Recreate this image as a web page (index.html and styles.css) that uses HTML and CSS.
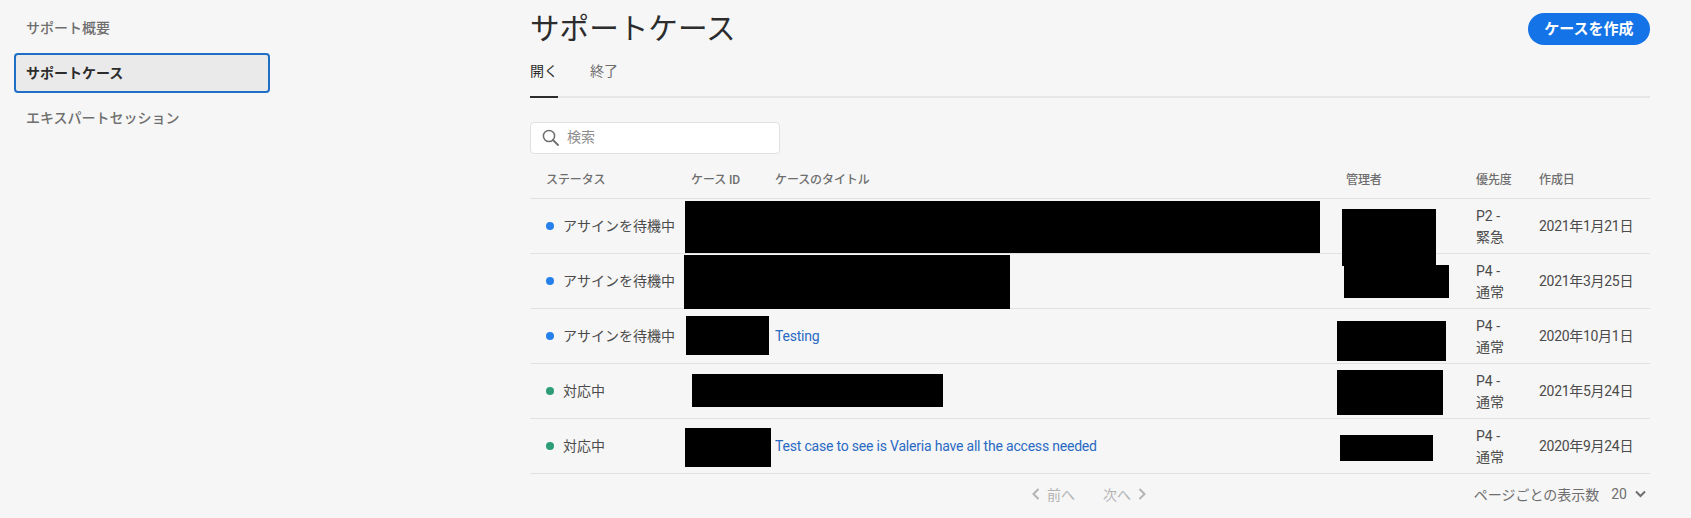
FILE: index.html
```html
<!DOCTYPE html>
<html lang="ja">
<head>
<meta charset="utf-8">
<title>サポートケース</title>
<link rel="stylesheet" href="styles.css">
</head>
<body>
<div class="page">
  <nav class="sidebar">
    <a class="nav-item">サポート概要</a>
    <a class="nav-item selected">サポートケース</a>
    <a class="nav-item">エキスパートセッション</a>
  </nav>
  <main class="main">
    <header class="head">
      <h1 class="title">サポートケース</h1>
      <button class="create">ケースを作成</button>
    </header>
    <div class="tabs">
      <span class="tab active">開く</span>
      <span class="tab">終了</span>
    </div>
    <div class="search">
      <svg class="search-icon" width="17" height="17" viewBox="0 0 17 17" fill="none" stroke="#6e6e6e" stroke-width="1.5"><circle cx="7" cy="7" r="5.6"/><path d="M11 11l5 5" stroke-linecap="round" stroke-width="1.8"/></svg>
      <span class="placeholder">検索</span>
    </div>
    <table class="cases">
      <colgroup>
        <col class="c-status"><col class="c-id"><col class="c-title"><col class="c-owner"><col class="c-prio"><col class="c-date">
      </colgroup>
      <thead>
        <tr><th class="first">ステータス</th><th>ケース ID</th><th>ケースのタイトル</th><th>管理者</th><th>優先度</th><th>作成日</th></tr>
      </thead>
      <tbody>
        <tr><td class="first"><i class="dot blue"></i>アサインを待機中</td><td></td><td></td><td></td><td class="prio">P2 - 緊急</td><td class="date">2021年1月21日</td></tr>
        <tr><td class="first"><i class="dot blue"></i>アサインを待機中</td><td></td><td></td><td></td><td class="prio">P4 - 通常</td><td class="date">2021年3月25日</td></tr>
        <tr><td class="first"><i class="dot blue"></i>アサインを待機中</td><td></td><td><a class="link">Testing</a></td><td></td><td class="prio">P4 - 通常</td><td class="date">2020年10月1日</td></tr>
        <tr><td class="first"><i class="dot green"></i>対応中</td><td></td><td></td><td></td><td class="prio">P4 - 通常</td><td class="date">2021年5月24日</td></tr>
        <tr><td class="first"><i class="dot green"></i>対応中</td><td></td><td><a class="link">Test case to see is Valeria have all the access needed</a></td><td></td><td class="prio">P4 - 通常</td><td class="date">2020年9月24日</td></tr>
      </tbody>
    </table>
    <div class="pager">
      <span class="pg">
        <svg width="8" height="12" viewBox="0 0 8 12" fill="none" stroke="#b3b3b3" stroke-width="2"><path d="M6.5 1L1.5 6l5 5"/></svg>
        <span>前へ</span>
      </span>
      <span class="pg next">
        <span>次へ</span>
        <svg width="8" height="12" viewBox="0 0 8 12" fill="none" stroke="#b3b3b3" stroke-width="2"><path d="M1.5 1l5 5-5 5"/></svg>
      </span>
      <span class="per-page">
        <span>ページごとの表示数</span>
        <span class="count">20</span>
        <svg width="11" height="8" viewBox="0 0 11 8" fill="none" stroke="#6e6e6e" stroke-width="2"><path d="M1 1.5l4.5 4.5L10 1.5"/></svg>
      </span>
    </div>
    <div class="redact r1"></div>
    <div class="redact r2"></div>
    <div class="redact r3"></div>
    <div class="redact r4"></div>
    <div class="redact r5"></div>
    <div class="redact m1"></div>
    <div class="redact m2"></div>
    <div class="redact m3"></div>
    <div class="redact m4"></div>
    <div class="redact m5"></div>
  </main>
</div>
</body>
</html>
```
FILE: styles.css
```css
* { box-sizing: border-box; }
html, body { margin: 0; height: 518px; overflow: hidden; }
body {
  background: #f6f6f6;
  color: #4b4b4b;
  font-family: Roboto, "Noto Sans CJK JP", sans-serif;
  font-size: 14px;
}
.page { display: flex; height: 518px; }

.sidebar {
  width: 530px;
  flex: none;
  padding: 8px 0 0 14px;
  display: flex;
  flex-direction: column;
  gap: 5px;
}
.nav-item {
  width: 256px;
  height: 40px;
  display: flex;
  align-items: center;
  padding: 0 0 2px 10px;
  font-weight: 500;
  color: #6e6e6e;
  border: 2px solid transparent;
  border-radius: 4px;
}
.nav-item.selected {
  background: #eaeaea;
  color: #2c2c2c;
  font-weight: 700;
  border-color: #1f6fc4;
}

.main { position: relative; width: 1120px; flex: none; }
.head {
  height: 54px;
  display: flex;
  align-items: flex-start;
  justify-content: space-between;
}
.title {
  margin: 8px 0 0;
  font-size: 29.6px;
  line-height: 42px;
  font-weight: 400;
  color: #2c2c2c;
}
.create {
  margin-top: 13px;
  width: 122px;
  height: 32px;
  border: 0;
  border-radius: 16px;
  background: #1473e6;
  color: #fff;
  font: 700 15px/30px Roboto, "Noto Sans CJK JP", sans-serif;
  padding: 0;
}

.tabs {
  height: 44px;
  display: flex;
  gap: 32px;
  border-bottom: 2px solid #e6e6e6;
}
.tab {
  height: 44px;
  line-height: 34px;
  color: #6e6e6e;
}
.tab.active { color: #2c2c2c; border-bottom: 2px solid #2c2c2c; }

.search {
  margin-top: 24px;
  width: 250px;
  height: 32px;
  display: flex;
  align-items: center;
  gap: 8px;
  padding: 0 0 1px 11px;
  background: #fff;
  border: 1px solid #e1e1e1;
  border-radius: 4px;
}
.placeholder { color: #8e8e8e; line-height: 18px; margin-bottom: 2px; }

.cases {
  width: 1120px;
  table-layout: fixed;
  border-collapse: collapse;
}
.c-status { width: 161px; }
.c-id { width: 84px; }
.c-title { width: 571px; }
.c-owner { width: 130px; }
.c-prio { width: 63px; }
.c-date { width: 111px; }
.cases th {
  height: 44px;
  padding: 6px 0 0;
  text-align: left;
  font-size: 12px;
  font-weight: 500;
  letter-spacing: -0.1px;
  color: #6e6e6e;
  border-bottom: 1px solid #e1e1e1;
}
.cases td {
  height: 55px;
  padding: 2px 0 0;
  border-bottom: 1px solid #e1e1e1;
  line-height: 21px;
}
.cases .first { padding-left: 16px; }
.cases .prio { padding-right: 24px; }
.cases .date { letter-spacing: -0.3px; }
.dot {
  display: inline-block;
  width: 8px;
  height: 8px;
  border-radius: 50%;
  margin-right: 9px;
  vertical-align: 1px;
}
.blue { background: #2680eb; }
.green { background: #2d9d78; }
.link { color: #2a6ac4; letter-spacing: -0.2px; }

.pager {
  height: 40px;
  display: flex;
  align-items: center;
  padding: 0 4px 0 502px;
  color: #b3b3b3;
}
.pg { display: flex; align-items: center; gap: 7px; }
.next { margin-left: 28px; }
.per-page {
  margin-left: auto;
  display: flex;
  align-items: center;
  color: #6e6e6e;
}
.count { margin: 0 8px 0 12px; }

.redact { position: absolute; background: #000; }
.r1 { left: 155px; top: 201px; width: 635px; height: 52px; }
.r2 { left: 154px; top: 255px; width: 326px; height: 54px; }
.r3 { left: 156px; top: 316px; width: 83px; height: 39px; }
.r4 { left: 162px; top: 374px; width: 251px; height: 33px; }
.r5 { left: 155px; top: 428px; width: 86px; height: 39px; }
.m1 { left: 812px; top: 209px; width: 94px; height: 57px; }
.m2 { left: 814px; top: 265px; width: 105px; height: 33px; }
.m3 { left: 807px; top: 321px; width: 109px; height: 40px; }
.m4 { left: 807px; top: 370px; width: 106px; height: 45px; }
.m5 { left: 810px; top: 435px; width: 93px; height: 26px; }
```
